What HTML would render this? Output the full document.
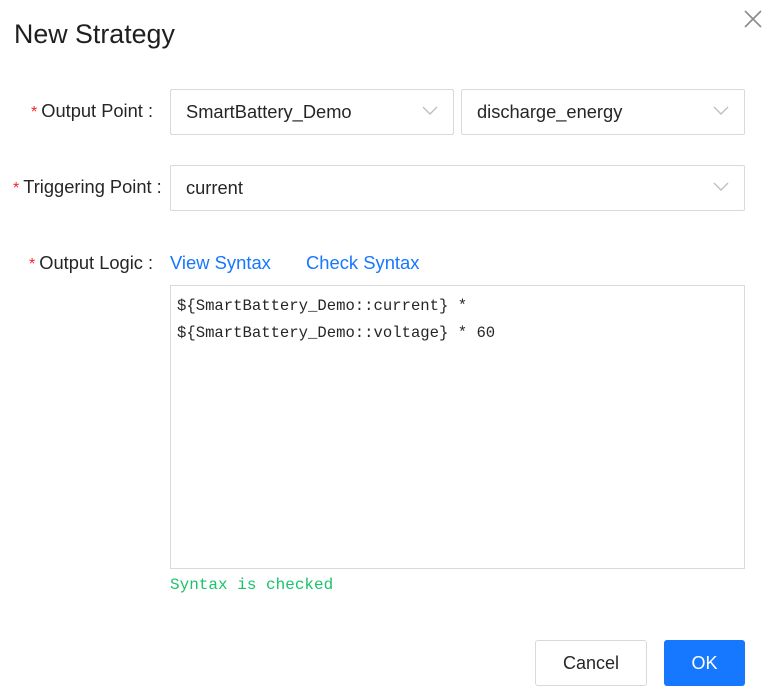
<!DOCTYPE html>
<html><head><meta charset="utf-8"><style>
body{margin:0;width:769px;height:697px;background:#fff;font-family:"Liberation Sans",sans-serif;color:#262626;position:relative;overflow:hidden}
.a{position:absolute}
.lbl{font-size:18.3px;color:#262626;white-space:nowrap}
.lbl b{color:#f5222d;font-weight:normal;font-size:16px;margin-right:4px}
.sel{position:absolute;border:1px solid #d9d9d9;border-radius:2px;box-sizing:border-box;font-size:18.3px;padding-left:15px;line-height:44px;height:46px}
.sel svg{position:absolute;right:15px;top:16px}
.link{color:#1677ff;font-size:18.4px}
</style></head><body>
<div class="a" style="left:14px;top:19px;font-size:26.8px;color:#1f1f1f">New Strategy</div>
<svg class="a" style="left:744px;top:10px" width="18" height="18" viewBox="0 0 18 18"><path d="M1 1L17 17M17 1L1 17" stroke="#8c8c8c" stroke-width="1.6"/></svg>

<div class="a lbl" style="left:31px;top:100px"><b>*</b>Output Point :</div>
<div class="sel" style="left:170px;top:89px;width:284px">SmartBattery_Demo<svg width="16" height="10"><path d="M1 1L8 8L15 1" fill="none" stroke="#bfbfbf" stroke-width="1.4"/></svg></div>
<div class="sel" style="left:461px;top:89px;width:284px">discharge_energy<svg width="16" height="10"><path d="M1 1L8 8L15 1" fill="none" stroke="#bfbfbf" stroke-width="1.4"/></svg></div>

<div class="a lbl" style="left:13px;top:176px"><b>*</b>Triggering Point :</div>
<div class="sel" style="left:170px;top:165px;width:575px">current<svg width="16" height="10"><path d="M1 1L8 8L15 1" fill="none" stroke="#bfbfbf" stroke-width="1.4"/></svg></div>

<div class="a lbl" style="left:29px;top:252px"><b>*</b>Output Logic :</div>
<div class="a link" style="left:170px;top:252px">View Syntax</div>
<div class="a link" style="left:306px;top:252px">Check Syntax</div>

<div class="a" style="left:170px;top:285px;width:575px;height:284px;border:1px solid #d9d9d9;box-sizing:border-box"></div>
<div class="a" style="left:177px;top:293px;font-family:'Liberation Mono',monospace;font-size:15.6px;line-height:27px;color:#262626;white-space:pre">${SmartBattery_Demo::current} *
${SmartBattery_Demo::voltage} * 60</div>
<div class="a" style="left:170px;top:576px;font-family:'Liberation Mono',monospace;font-size:16px;color:#19c36a">Syntax is checked</div>

<div class="a" style="left:535px;top:640px;width:112px;height:46px;border:1px solid #d9d9d9;border-radius:3px;box-sizing:border-box;text-align:center;line-height:44px;font-size:18px">Cancel</div>
<div class="a" style="left:664px;top:640px;width:81px;height:46px;background:#1677ff;border-radius:3px;text-align:center;line-height:46px;font-size:18px;color:#fff">OK</div>
</body></html>
